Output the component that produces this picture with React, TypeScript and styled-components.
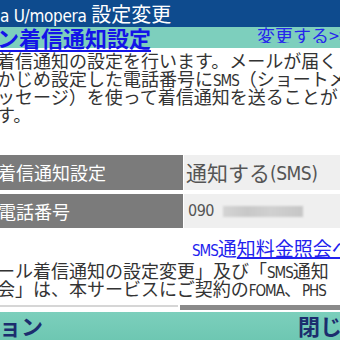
import React from "react";
import styled, { createGlobalStyle } from "styled-components";

const Global = createGlobalStyle`
  html, body { margin: 0; padding: 0; background: #fff; overflow: hidden; }
  body { font-family: "Noto Sans CJK JP", "Noto Sans", sans-serif; }
`;

const Screen = styled.div`
  width: 340px;
  height: 340px;
  overflow: hidden;
  background: #fff;
  display: flex;
  flex-direction: column;
  white-space: nowrap;
`;

const TitleBar = styled.div`
  height: 27px;
  flex: 0 0 27px;
  background: #0e4b8e;
  color: #fff;
  font-size: 20px;
  line-height: 27px;
`;

const TitleLatin = styled.span`
  font-family: "DejaVu Sans Condensed", "Liberation Sans", sans-serif;
  font-size: 17px;
  line-height: 0;
  letter-spacing: -0.3px;
`;

const HeadingBar = styled.div`
  height: 21px;
  flex: 0 0 21px;
  background: #7dcfbd;
  display: flex;
  justify-content: space-between;
  align-items: flex-start;
`;

const Heading = styled.h1`
  margin: 0 0 0 -3px;
  font-size: 22px;
  line-height: 20px;
  font-weight: bold;
  color: #1414e8;
  text-decoration: underline;
  text-decoration-thickness: 2px;
  text-underline-offset: 3px;
`;

const TopLink = styled.a`
  flex: 0 0 83px;
  overflow: hidden;
  font-size: 18px;
  line-height: 16px;
  color: #2626ec;
  text-decoration: underline;
  text-decoration-thickness: 2px;
  text-underline-offset: 0px;
`;

const Text = styled.div<{ $top: number }>`
  flex: 0 0 auto;
  margin: ${(p) => p.$top}px 0 0 -3px;
  font-size: 18px;
  line-height: 18px;
  color: #333;
`;

const Line = styled.div`
  height: 18px;
  white-space: nowrap;
`;

const Latin = styled.span`
  font-family: "DejaVu Sans Condensed", "Liberation Sans", sans-serif;
  font-size: 15px;
  line-height: 0;
  letter-spacing: -1px;
`;

const Table = styled.div`
  flex: 0 0 auto;
  margin-top: 32px;
  display: grid;
  grid-template-columns: 183px 1fr;
  column-gap: 1px;
  row-gap: 4px;
`;

const LabelCell = styled.div<{ $h: number }>`
  height: ${(p) => p.$h}px;
  background: #7b7b7b;
  color: #fff;
  font-size: 18px;
  line-height: ${(p) => p.$h}px;
  text-indent: -2px;
`;

const ValueCell = styled.div<{ $h: number; $small?: boolean }>`
  height: ${(p) => p.$h}px;
  background: #efefef;
  color: #555;
  font-size: ${(p) => (p.$small ? 15 : 21)}px;
  line-height: ${(p) => p.$h}px;
  padding-left: ${(p) => (p.$small ? 4 : 2)}px;
  display: flex;
  align-items: center;
`;

const ValueLatin = styled.span<{ $size: number }>`
  font-family: "DejaVu Sans Condensed", "Liberation Sans", sans-serif;
  font-size: ${(p) => p.$size}px;
  line-height: 0;
  letter-spacing: -0.5px;
`;

const Blurred = styled.span`
  display: inline-block;
  width: 80px;
  height: 11px;
  margin-left: 9px;
  background: linear-gradient(90deg, #d4d4d4, #c8c8c8 30%, #d0d0d0 60%, #c6c6c6);
  filter: blur(1.2px);
`;

const FeeLink = styled.a`
  flex: 0 0 19px;
  height: 19px;
  margin: 10px 0 0 192px;
  font-size: 19px;
  line-height: 19px;
  color: #2222ee;
  text-decoration: none;
`;

const Underlined = styled.span`
  text-decoration: underline;
  text-decoration-thickness: 2px;
  text-underline-offset: 1px;
`;

const Scrollbar = styled.div`
  margin-top: 8px;
  height: 5px;
  flex: 0 0 5px;
  display: flex;
  align-items: flex-start;
  gap: 2px;
`;

const Track = styled.div`
  flex: 0 0 178px;
  height: 2px;
  background: #d6d6d6;
`;

const Thumb = styled.div`
  flex: 1;
  height: 5px;
  background: #8a8a8a;
`;

const Footer = styled.div`
  margin-top: 2px;
  flex: 1;
  background: linear-gradient(180deg, #7ccfbc, #6ec7b2);
  display: flex;
  justify-content: space-between;
  align-items: flex-start;
`;

const SoftKey = styled.span<{ $right?: boolean }>`
  font-size: 22px;
  line-height: 26px;
  font-weight: bold;
  color: #1c2d6e;
  margin-left: ${(p) => (p.$right ? 0 : -1)}px;
  width: ${(p) => (p.$right ? "42px" : "auto")};
  overflow: hidden;
`;

export default function App() {
  return (
    <>
      <Global />
      <Screen>
        <TitleBar>
          <TitleLatin>a U/mopera </TitleLatin>設定変更
        </TitleBar>
        <HeadingBar>
          <Heading>ン着信通知設定</Heading>
          <TopLink href="#">変更する&gt;&gt;&gt;</TopLink>
        </HeadingBar>
        <Text $top={3}>
          <Line>着信通知の設定を行います。メールが届く</Line>
          <Line>
            かじめ設定した電話番号に<Latin>SMS</Latin>（ショートメ
          </Line>
          <Line>ッセージ）を使って着信通知を送ることが</Line>
          <Line>す。</Line>
        </Text>
        <Table>
          <LabelCell $h={35}>着信通知設定</LabelCell>
          <ValueCell $h={35}>
            通知する<ValueLatin $size={19}>(SMS)</ValueLatin>
          </ValueCell>
          <LabelCell $h={34}>電話番号</LabelCell>
          <ValueCell $h={34} $small>
            <ValueLatin $size={16}>090</ValueLatin>
            <Blurred />
          </ValueCell>
        </Table>
        <FeeLink href="#">
          <Latin>SMS</Latin>通<Underlined>知料金照会へ</Underlined>
        </FeeLink>
        <Text $top={4}>
          <Line>
            ール着信通知の設定変更」及び「<Latin>SMS</Latin>通知
          </Line>
          <Line>
            会」は、本サービスにご契約の<Latin>FOMA</Latin>、<Latin>PHS</Latin>
          </Line>
        </Text>
        <Scrollbar>
          <Track />
          <Thumb />
        </Scrollbar>
        <Footer>
          <SoftKey>ョン</SoftKey>
          <SoftKey $right>閉じ</SoftKey>
        </Footer>
      </Screen>
    </>
  );
}
